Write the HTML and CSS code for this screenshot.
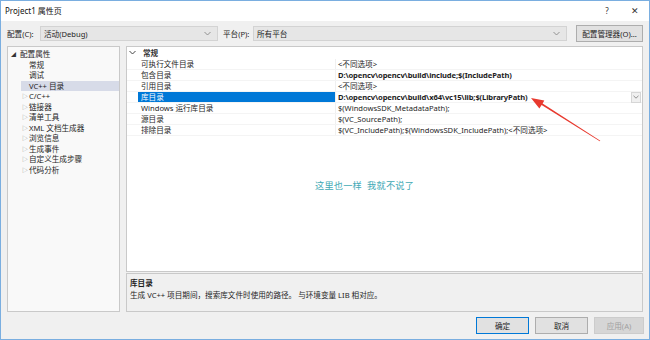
FILE: index.html
```html
<!DOCTYPE html>
<html lang="zh-CN">

<head>
    <meta charset="UTF-8">
    <title>Project1 属性页</title>
    <link rel="stylesheet" href="styles.css">
</head>

<body>
    <div class="dialog">
        <!-- 标题栏 -->
        <div class="titlebar">
            <span class="title">Project1 属性页</span>
            <span class="help">?</span>
            <span class="close">✕</span>
        </div>

        <!-- 配置 / 平台 -->
        <div class="toolbar">
            <span class="label">配置(C):</span>
            <div class="combo combo-config">
                <span>活动(Debug)</span>
                <svg class="caret" width="7" height="5" viewBox="0 0 7 5"><path d="M0.5 1 L3.5 4 L6.5 1" fill="none" stroke="#888" stroke-width="0.9"/></svg>
            </div>
            <span class="label label-platform">平台(P):</span>
            <div class="combo combo-platform">
                <span>所有平台</span>
                <svg class="caret" width="7" height="5" viewBox="0 0 7 5"><path d="M0.5 1 L3.5 4 L6.5 1" fill="none" stroke="#888" stroke-width="0.9"/></svg>
            </div>
            <button class="btn btn-manager">配置管理器(O)...</button>
        </div>

        <div class="body">
            <!-- 左侧树 -->
            <ul class="tree">
                <li class="root"><span class="open">◢</span>配置属性</li>
                <li class="leaf">常规</li>
                <li class="leaf">调试</li>
                <li class="leaf active">VC++ 目录</li>
                <li class="node"><span class="shut">▷</span>C/C++</li>
                <li class="node"><span class="shut">▷</span>链接器</li>
                <li class="node"><span class="shut">▷</span>清单工具</li>
                <li class="node"><span class="shut">▷</span>XML 文档生成器</li>
                <li class="node"><span class="shut">▷</span>浏览信息</li>
                <li class="node"><span class="shut">▷</span>生成事件</li>
                <li class="node"><span class="shut">▷</span>自定义生成步骤</li>
                <li class="node"><span class="shut">▷</span>代码分析</li>
            </ul>

            <div class="right">
                <!-- 属性表 -->
                <div class="grid">
                    <div class="group">
                        <svg class="chev" width="7" height="5" viewBox="0 0 7 5"><path d="M0.5 1 L3.5 4 L6.5 1" fill="none" stroke="#444" stroke-width="1"/></svg>
                        <span>常规</span>
                    </div>
                    <div class="row"><span class="name">可执行文件目录</span><span class="value">&lt;不同选项&gt;</span></div>
                    <div class="row"><span class="name">包含目录</span><span class="value bold">D:\opencv\opencv\build\include;$(IncludePath)</span></div>
                    <div class="row"><span class="name">引用目录</span><span class="value">&lt;不同选项&gt;</span></div>
                    <div class="row selected">
                        <span class="name">库目录</span>
                        <span class="value bold">D:\opencv\opencv\build\x64\vc15\lib;$(LibraryPath)</span>
                        <span class="drop"><svg width="6" height="4" viewBox="0 0 6 4"><path d="M0.5 0.8 L3 3.2 L5.5 0.8" fill="none" stroke="#777" stroke-width="0.8"/></svg></span>
                    </div>
                    <div class="row"><span class="name">Windows 运行库目录</span><span class="value">$(WindowsSDK_MetadataPath);</span></div>
                    <div class="row"><span class="name">源目录</span><span class="value">$(VC_SourcePath);</span></div>
                    <div class="row"><span class="name">排除目录</span><span class="value">$(VC_IncludePath);$(WindowsSDK_IncludePath);&lt;不同选项&gt;</span></div>

                    <!-- 批注 -->
                    <p class="note">这里也一样&nbsp;&nbsp;我就不说了</p>
                    <svg class="arrow" width="515" height="224" viewBox="0 0 515 224">
                        <polygon points="404,51 417.3,53.6 415.6,56.5 473.3,93.8 472.8,94.2 414.6,58.1 412.4,61.4" fill="#e8392e"/>
                    </svg>
                </div>

                <!-- 说明 -->
                <div class="desc">
                    <p class="desc-title">库目录</p>
                    <p class="desc-text">生成 VC++ 项目期间，搜索库文件时使用的路径。 与环境变量 LIB 相对应。</p>
                </div>
            </div>
        </div>

        <div class="buttons">
            <button class="btn btn-ok">确定</button>
            <button class="btn btn-cancel">取消</button>
            <button class="btn btn-apply">应用(A)</button>
        </div>
    </div>
</body>

</html>
```

FILE: styles.css
```css
* {
    margin: 0;
    padding: 0;
    box-sizing: border-box;
    list-style: none;
}

html,
body {
    width: 650px;
    height: 340px;
    overflow: hidden;
}

body {
    font-family: "Noto Sans", "Noto Sans CJK SC", sans-serif;
    font-size: 7.6px;
    color: #1e1e1e;
}

.dialog {
    width: 650px;
    height: 340px;
    border: 1px solid #7aaee0;
    background: #f0f0f0;
    display: flex;
    flex-direction: column;
}

/* 标题栏 */
.titlebar {
    height: 20px;
    background: #fff;
    display: flex;
    align-items: center;
    padding: 0 0 2px 4px;
}

.title {
    flex: 1;
    font-size: 8px;
    color: #111;
}

.help {
    width: 28px;
    text-align: center;
    font-size: 8px;
    color: #333;
}

.close {
    width: 28px;
    text-align: center;
    font-size: 9px;
    color: #333;
}

/* 配置行 */
.toolbar {
    display: flex;
    align-items: center;
    height: 17px;
    margin-top: 4px;
    padding: 0 6px;
}

.label {
    width: 33px;
    color: #1e1e1e;
}

.label-platform {
    width: 30px;
    margin-left: 5px;
}

.combo {
    height: 15px;
    background: #e6e6e6;
    border: 1px solid #d3d3d3;
    display: flex;
    align-items: center;
    justify-content: space-between;
    padding: 0 6px 0 3px;
}

.combo-config {
    width: 178px;
}

.combo-platform {
    width: 314px;
}

.caret {
    display: block;
}

.btn {
    font-family: "Noto Sans", "Noto Sans CJK SC", sans-serif;
    font-size: 7.6px;
    color: #1e1e1e;
    background: #e1e1e1;
    border: 1px solid #adadad;
}

.btn-manager {
    width: 67px;
    height: 17px;
    margin-left: 9px;
}

/* 主体 */
.body {
    display: flex;
    gap: 6px;
    height: 266px;
    margin-top: 4px;
    padding: 0 6px;
}

.tree {
    width: 113px;
    background: #f9f9f9;
    border: 1px solid #c9c9c9;
    padding-top: 2px;
}

.tree li {
    height: 10.5px;
    line-height: 10.5px;
    position: relative;
    white-space: nowrap;
}

.tree .root {
    padding-left: 3px;
}

.tree .leaf,
.tree .node {
    padding-left: 21px;
}

.tree .active {
    background: #d7dbe8;
    margin-left: 13px;
    padding-left: 8px;
}

.open {
    display: inline-block;
    width: 9px;
    font-size: 5px;
    color: #333;
    vertical-align: top;
}

.shut {
    position: absolute;
    left: 14px;
    font-size: 6px;
    color: #8a8a8a;
}

.right {
    flex: 1;
    display: flex;
    flex-direction: column;
    gap: 1px;
}

.grid {
    position: relative;
    height: 226px;
    background: #fff;
    border: 1px solid #c9c9c9;
}

.group {
    height: 11.5px;
    display: flex;
    align-items: center;
    font-weight: bold;
    color: #333;
}

.chev {
    margin: 0 7px 0 2px;
}

.row {
    display: flex;
    height: 11px;
    line-height: 11px;
    padding-left: 11px;
    border-bottom: 1px solid #f4f4f4;
}

.name {
    width: 198px;
    padding-left: 3px;
    border-right: 1px solid #f0f0f0;
    color: #1e1e1e;
    white-space: nowrap;
}

.value {
    flex: 1;
    padding-left: 2px;
    white-space: nowrap;
    color: #1e1e1e;
}

.bold {
    font-weight: bold;
    letter-spacing: -0.12px;
}

.selected .name {
    background: #0078d7;
    color: #fff;
}

.drop {
    width: 10px;
    height: 11px;
    margin-right: 1px;
    background: #f0f0f0;
    border: 1px solid #d6d6d6;
    display: flex;
    align-items: center;
    justify-content: center;
}

.note {
    position: absolute;
    left: 188px;
    top: 131px;
    font-size: 9.2px;
    color: #3fa9b5;
    letter-spacing: 0.2px;
}

.arrow {
    position: absolute;
    left: 0;
    top: 0;
}

.desc {
    height: 39px;
    background: #f0f0f0;
    border: 1px solid #c9c9c9;
    padding: 3px 3px 0;
}

.desc-title {
    font-weight: bold;
    line-height: 12px;
}

.desc-text {
    line-height: 12px;
}

/* 底部按钮 */
.buttons {
    display: flex;
    justify-content: flex-end;
    gap: 6px;
    height: 17px;
    margin-top: 5px;
    padding-right: 5px;
}

.buttons .btn {
    width: 53px;
    height: 17px;
}

.btn-ok {
    border-color: #0078d7;
}

.btn-apply {
    width: 50px !important;
    background: #d6d6d6;
    border-color: #cccccc;
    color: #a0a0a0;
}
```
